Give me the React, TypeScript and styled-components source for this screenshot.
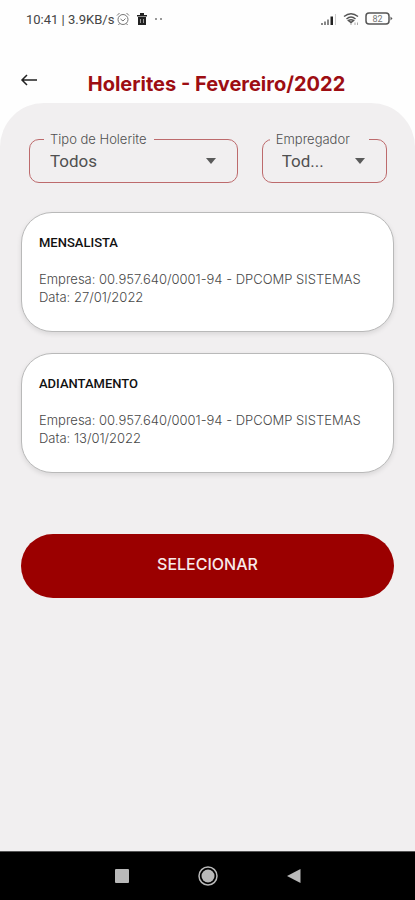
import React from "react";
import styled, { createGlobalStyle } from "styled-components";

const GlobalStyle = createGlobalStyle`
  * { box-sizing: border-box; }
  body { margin: 0; background: #fff; font-family: Inter, "Open Sans", sans-serif; }
  button, select { font: inherit; }
`;

const Screen = styled.div`
  min-height: 100vh;
  display: flex;
  flex-direction: column;
  background: #fefefe;
`;

const StatusBar = styled.div`
  height: 38px;
  padding: 0 22px 0 26px;
  display: flex;
  align-items: center;
  justify-content: space-between;
  color: #444;
  font-family: Roboto, sans-serif;
  font-size: 13px;
`;

const StatusGroup = styled.div<{ $gap: number }>`
  display: flex;
  align-items: center;
  gap: ${(p) => p.$gap}px;
`;

const Header = styled.header`
  height: 65px;
  padding: 26px 20px 0;
  display: flex;
  align-items: flex-start;
`;

const BackButton = styled.button`
  width: 18px;
  height: 32px;
  padding: 0;
  border: 0;
  background: none;
  color: #222;
  line-height: 0;
`;

const Title = styled.h1`
  flex: 1;
  margin: 8px 0 0;
  color: #9d0d12;
  font-size: 20px;
  line-height: 24px;
  font-weight: 700;
  text-align: center;
  white-space: nowrap;
`;

const Panel = styled.main`
  flex: 1;
  padding: 28px 21px 32px;
  border-radius: 44px 44px 0 0;
  background: #f1eff0;
  display: flex;
  flex-direction: column;
`;

const Filters = styled.div`
  display: grid;
  grid-template-columns: 5fr 3fr;
  gap: 24px;
  padding: 0 7px 0 8px;
  margin-bottom: 29px;
`;

const Field = styled.fieldset<{ $indent: number }>`
  min-width: 0;
  height: 52px;
  margin: 0;
  padding: 0 20px 0 ${(p) => p.$indent}px;
  border: 1px solid #bd6a6c;
  border-radius: 10px;
`;

const Legend = styled.legend<{ $pull: number; $tail: number }>`
  margin-left: -${(p) => p.$pull}px;
  padding: 0 ${(p) => p.$tail}px 0 6px;
  color: #505050;
  font-size: 13px;
  line-height: 16px;
  font-weight: 300;
`;

const SelectBox = styled.div`
  display: flex;
  align-items: center;
`;

const Select = styled.select`
  flex: 1;
  min-width: 0;
  height: 28px;
  padding: 0;
  border: 0;
  appearance: none;
  background: none;
  color: #505050;
  font-family: Roboto, sans-serif;
  font-size: 17px;
`;

const Caret = styled.svg`
  flex: none;
  pointer-events: none;
`;

const Cards = styled.div`
  display: grid;
  gap: 21px;
`;

const Card = styled.article`
  min-height: 120px;
  padding: 21px 17px;
  border: 1px solid #b9b9b9;
  border-radius: 31px;
  background: #fff;
  box-shadow: 0 2px 5px rgba(0, 0, 0, 0.1);
`;

const CardTitle = styled.h2`
  margin: 0 0 18px;
  color: #111;
  font-family: Roboto, sans-serif;
  font-size: 13px;
  line-height: 18px;
  font-weight: 500;
`;

const CardLine = styled.p`
  margin: 0;
  color: #484848;
  font-size: 13px;
  line-height: 18px;
  font-weight: 300;
`;

const SubmitButton = styled.button`
  height: 64px;
  margin-top: 61px;
  padding: 0 24px 4px;
  border: 0;
  border-radius: 32px;
  background: #9b0000;
  color: #f8eaea;
  font-size: 16px;
  font-weight: 500;
`;

const NavBar = styled.nav`
  height: 49px;
  border-top: 1px solid #555;
  background: #000;
  display: flex;
  align-items: center;
  justify-content: center;
  gap: 62px;
`;

const NavButton = styled.button`
  width: 24px;
  height: 24px;
  padding: 0;
  border: 0;
  background: none;
  display: grid;
  place-items: center;
`;

type FilterProps = { id: string; label: string; value: string; indent: number; pull: number; tail: number };

function Filter({ id, label, value, indent, pull, tail }: FilterProps) {
  return (
    <Field $indent={indent}>
      <Legend $pull={pull} $tail={tail}>
        <label htmlFor={id}>{label}</label>
      </Legend>
      <SelectBox>
        <Select id={id} defaultValue={value}>
          <option>{value}</option>
        </Select>
        <Caret width="12" height="6" viewBox="0 0 12 6">
          <path d="M1 0h10L6 6z" fill="#5a5a5a" />
        </Caret>
      </SelectBox>
    </Field>
  );
}

const payslips = [
  { kind: "MENSALISTA", company: "00.957.640/0001-94 - DPCOMP SISTEMAS", date: "27/01/2022" },
  { kind: "ADIANTAMENTO", company: "00.957.640/0001-94 - DPCOMP SISTEMAS", date: "13/01/2022" },
];

export default function App() {
  return (
    <Screen>
      <GlobalStyle />
      <StatusBar>
        <StatusGroup $gap={2}>
          <span>10:41 | 3.9KB/s</span>
          <svg width="14" height="14" viewBox="0 0 14 14" fill="none" stroke="#777">
            <circle cx="7" cy="7.5" r="5" />
            <path d="M1 3.5 3.5 1M13 3.5 10.500 1M4.500 7 7 9l2.500-2.500M3.500 11.500 2.500 13M10.500 11.500l1 1.500" />
          </svg>
          <svg width="20" height="14" viewBox="0 0 20 14">
            <path d="M5 3h10v1.500H5zM8 1h4v2H8zM6 5h8v8H6z" fill="#222" />
            <path d="M8.500 7v4M11.500 7v4" stroke="#999" />
          </svg>
          <svg width="10" height="4" viewBox="0 0 10 4" fill="#777">
            <circle cx="2" cy="2" r="1" />
            <circle cx="7" cy="2" r="1" />
          </svg>
        </StatusGroup>
        <StatusGroup $gap={6}>
          <svg width="17" height="13" viewBox="0 0 17 13">
            <path d="M1 10h2v2H1zM4 8.500h2V12H4zM7 6.500h2V12H7z" fill="#888" />
            <path d="M10.500 3.500h2.500V12h-2.500z" fill="#222" />
            <path d="M15 1h1v11h-1z" fill="#ccc" />
          </svg>
          <svg width="16" height="14" viewBox="0 0 16 14" fill="none" stroke="#555" strokeWidth="1.500">
            <path d="M1 4.500Q8-1 15 4.500M3.500 7Q8 3 12.500 7M5.500 8.500Q8 7 10.500 8.500L8 10.500z" />
            <path d="M8 11v2M12 10.500v2.500M14.500 10.500v2.500" stroke="#aaa" strokeWidth="1" />
          </svg>
          <svg width="28" height="14" viewBox="0 0 28 14">
            <rect x="1" y="1" width="23" height="11" rx="3" fill="none" stroke="#555" strokeWidth="1.500" />
            <path d="M25.500 4.500 27.500 6.500l-2 2z" fill="#555" />
            <text x="12.500" y="10" fontSize="9" textAnchor="middle" fill="#777">82</text>
          </svg>
        </StatusGroup>
      </StatusBar>
      <Header>
        <BackButton aria-label="Voltar">
          <svg width="18" height="14" viewBox="0 0 18 14" fill="none" stroke="currentColor" strokeWidth="1.500">
            <path d="M17 7H2M7 2 2 7l5 5" />
          </svg>
        </BackButton>
        <Title>Holerites - Fevereiro/2022</Title>
      </Header>
      <Panel>
        <Filters>
          <Filter id="tipo" label="Tipo de Holerite" value="Todos" indent={20} pull={6} tail={7} />
          <Filter id="empregador" label="Empregador" value="Tod..." indent={19} pull={12} tail={19} />
        </Filters>
        <Cards>
          {payslips.map((p) => (
            <Card key={p.kind}>
              <CardTitle>{p.kind}</CardTitle>
              <CardLine>Empresa: {p.company}</CardLine>
              <CardLine>Data: {p.date}</CardLine>
            </Card>
          ))}
        </Cards>
        <SubmitButton type="button">SELECIONAR</SubmitButton>
      </Panel>
      <NavBar>
        <NavButton aria-label="Recentes">
          <svg width="14" height="14" viewBox="0 0 14 14">
            <rect width="14" height="14" rx="1" fill="#b9b9b9" />
          </svg>
        </NavButton>
        <NavButton aria-label="Início">
          <svg width="20" height="20" viewBox="0 0 20 20">
            <circle cx="10" cy="10" r="9" fill="none" stroke="#b9b9b9" strokeWidth="1.500" />
            <circle cx="10" cy="10" r="6.500" fill="#b9b9b9" />
          </svg>
        </NavButton>
        <NavButton aria-label="Voltar ao anterior">
          <svg width="14" height="14" viewBox="0 0 14 14">
            <path d="M13.500 0v14L0 7z" fill="#b9b9b9" />
          </svg>
        </NavButton>
      </NavBar>
    </Screen>
  );
}
